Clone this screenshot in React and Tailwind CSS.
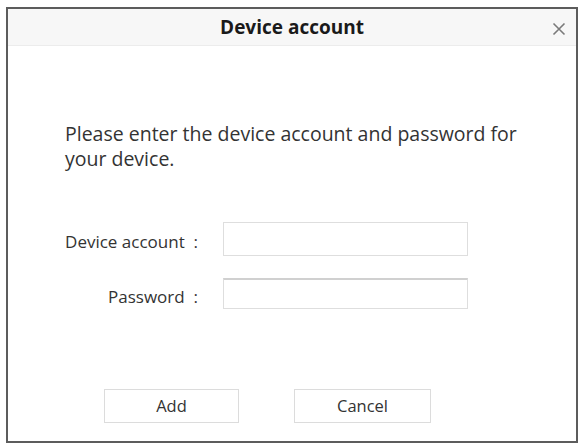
export default function App() {
  const font = { fontFamily: '"Open Sans", "Noto Sans", sans-serif' };

  return (
    <div className="w-[579px] h-[445px] bg-white pt-[7px] pl-[6px] pr-px pb-[2px]" style={font}>
      <div className="h-full border-2 border-[#5c5c5c] flex flex-col bg-white">
        {/* title bar */}
        <div className="relative h-[37px] flex items-center justify-center bg-[#f7f7f7] border-b border-[#ececec]">
          <span className="text-[19px] font-bold text-[#1a1a1a]">Device account</span>
          <button className="absolute right-[6px] top-[9px] w-[22px] h-[22px] flex items-center justify-center text-[#7a7a7a]">
            <svg width="14" height="14" viewBox="0 0 14 14" fill="none" stroke="currentColor" strokeWidth="1.6">
              <path d="M1.5 1.5 L12.5 12.5 M12.5 1.5 L1.5 12.5" />
            </svg>
          </button>
        </div>

        <div className="flex-1 flex flex-col">
          <p className="mt-[75px] ml-[57px] w-[470px] text-[19.5px] leading-[25px] text-[#333333]">
            Please enter the device account and password for your device.
          </p>

          <div className="mt-[51px] flex flex-col gap-[22px]">
            <div className="flex items-center">
              <label className="w-[190px] mt-[5px] text-right text-[17px] text-[#333333]">Device account&nbsp;&nbsp;:</label>
              <input className="ml-[25px] w-[245px] h-[34px] border border-[#dedede] bg-white outline-none" />
            </div>
            <div className="flex items-center">
              <label className="w-[190px] mt-[6px] text-right text-[17px] text-[#333333]">Password&nbsp;&nbsp;:</label>
              <input type="password" className="ml-[25px] w-[245px] h-[31px] border border-[#dedede] border-t-2 border-t-[#d0d0d0] bg-white outline-none" />
            </div>
          </div>

          <div className="mt-auto mb-[18px] flex pl-[96px] gap-[55px]">
            <button className="w-[135px] h-[34px] border border-[#dcdcdc] bg-white text-[16.5px] text-[#333333]">Add</button>
            <button className="w-[137px] h-[34px] border border-[#dcdcdc] bg-white text-[16.5px] text-[#333333]">Cancel</button>
          </div>
        </div>
      </div>
    </div>
  );
}
